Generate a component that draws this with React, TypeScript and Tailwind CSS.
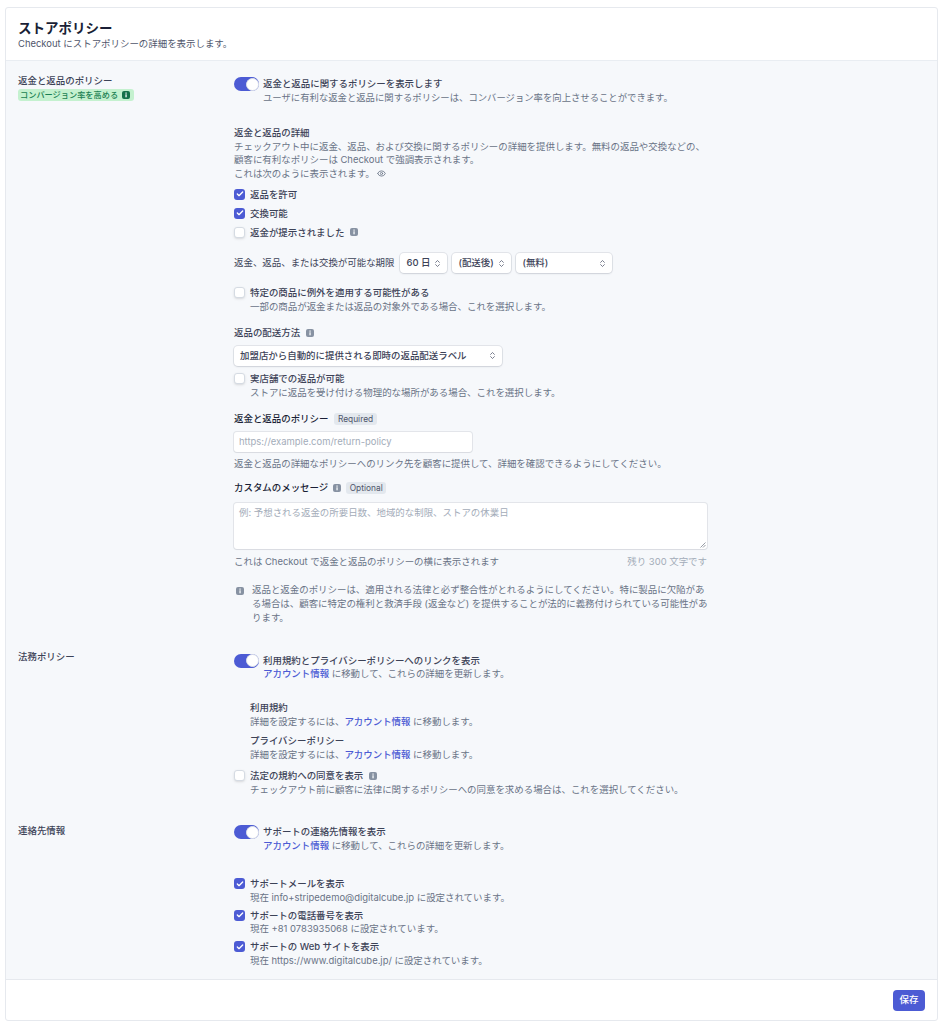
import { ChevronsUpDown, Check, Eye } from "lucide-react";
import type { ReactNode } from "react";

function Info({ color = "bg-[#8792a2]" }: { color?: string }) {
  return (
    <span className={`inline-flex h-[8px] w-[8px] flex-none items-center justify-center rounded-[2px] ${color}`}>
      <svg viewBox="0 0 8 8" className="h-[8px] w-[8px]" fill="#f6f8fb">
        <rect x="3.4" y="3.3" width="1.3" height="3" />
        <rect x="3.4" y="1.5" width="1.3" height="1.2" />
      </svg>
    </span>
  );
}

function Toggle() {
  return (
    <span className="flex h-[14px] w-[25px] flex-none items-center justify-end rounded-full bg-[#4c5bd4] pr-[0.5px]">
      <span className="h-[13px] w-[13px] rounded-full border border-[#dfe3ea] bg-white" />
    </span>
  );
}

function CheckBox({ on = false }: { on?: boolean }) {
  return on ? (
    <span className="mt-[1px] flex h-[11px] w-[11px] flex-none items-center justify-center rounded-[3px] bg-[#4c5bd4]">
      <Check size={8} strokeWidth={4} color="white" />
    </span>
  ) : (
    <span className="mt-[1px] h-[11px] w-[11px] flex-none rounded-[3px] border border-[#d5dbe3] bg-white shadow-sm" />
  );
}

function Title({ children }: { children: ReactNode }) {
  return <div className="font-medium text-[#3c4257]">{children}</div>;
}

function Muted({ children }: { children: ReactNode }) {
  return <div className="whitespace-nowrap text-[#697386]">{children}</div>;
}

function Link() {
  return <span className="font-medium text-[#4c5bd4]">アカウント情報</span>;
}

function CheckRow({ on, title, desc, className = "" }: { on?: boolean; title: ReactNode; desc?: ReactNode; className?: string }) {
  return (
    <div className={`flex gap-[5px] ${className}`}>
      <CheckBox on={on} />
      <div>
        <Title>{title}</Title>
        {desc && <Muted>{desc}</Muted>}
      </div>
    </div>
  );
}

function ToggleRow({ title, desc }: { title: string; desc: ReactNode }) {
  return (
    <div className="flex gap-[4px]">
      <Toggle />
      <div>
        <Title>{title}</Title>
        <Muted>{desc}</Muted>
      </div>
    </div>
  );
}

function Select({ label, width }: { label: string; width: string }) {
  return (
    <div className={`flex h-[20px] items-center justify-between rounded-[4px] bg-white pl-[6px] pr-[5px] font-medium text-[#3c4257] shadow-[0_0_0_1px_rgba(60,66,87,0.1),0_1px_2px_rgba(60,66,87,0.12)] ${width}`}>
      <span>{label}</span>
      <ChevronsUpDown size={9} strokeWidth={2} color="#4f566b" />
    </div>
  );
}

function Tag({ children }: { children: ReactNode }) {
  return <span className="rounded-[3px] bg-[#e3e8ee] px-[3.5px] text-[8.4px] font-normal leading-[12px] text-[#4f566b]">{children}</span>;
}

export default function App() {
  return (
    <div className="bg-white pb-[3px] pl-[5px] pr-[6px] pt-[7px] text-[9.45px] leading-[13.5px] [font-family:Inter,'Noto_Sans_CJK_JP',sans-serif]">
      <div className="rounded-[3px] border border-[#e6e9ee]">
        <div className="h-[53px] border-b border-[#e9edf2] px-[12px] pt-[11px]">
          <div className="text-[13.5px] font-bold leading-[18px] text-[#1a1f36]">ストアポリシー</div>
          <div className="leading-[13px] text-[#4f566b]">Checkout にストアポリシーの詳細を表示します。</div>
        </div>

        <div className="h-[918px] bg-[#f6f8fb] pl-[12px] pt-[13px]">
          {/* 返金と返品 */}
          <div className="flex">
            <div className="w-[216px] flex-none">
              <div className="font-medium text-[#3c4257]">返金と返品のポリシー</div>
              <div className="inline-flex h-[12px] items-center gap-[4px] rounded-[3px] bg-[#c4f1cf] pl-[2px] pr-[4px] text-[8.2px] font-medium text-[#1a7f52]">
                コンバージョン率を高める
                <Info color="bg-[#15714a]" />
              </div>
            </div>
            <div className="w-[474px] flex-none pt-[3px]">
              <ToggleRow title="返金と返品に関するポリシーを表示します" desc={<span className="text-[9.36px]">ユーザに有利な返金と返品に関するポリシーは、コンバージョン率を向上させることができます。</span>} />

              <div className="mt-[22px]">
                <Title>返金と返品の詳細</Title>
                <Muted>チェックアウト中に返金、返品、および交換に関するポリシーの詳細を提供します。無料の返品や交換などの、</Muted>
                <Muted>顧客に有利なポリシーは Checkout で強調表示されます。</Muted>
                <div className="flex items-center gap-[2px] text-[#697386]">
                  これは次のように表示されます。
                  <Eye size={9} strokeWidth={2.2} color="#697386" />
                </div>
              </div>

              <CheckRow on title="返品を許可" className="mt-[7.5px]" />
              <CheckRow on title="交換可能" className="mt-[5.5px]" />
              <CheckRow title={<span className="flex items-center gap-[6px]">返金が提示されました<Info /></span>} className="mt-[5.5px]" />

              <div className="mt-[14px] flex items-center">
                <span className="mr-[6px] text-[#3c4257]">返金、返品、または交換が可能な期限</span>
                <Select label="60 日" width="w-[47px]" />
                <Select label="(配送後)" width="ml-[5px] w-[59px]" />
                <Select label="(無料)" width="ml-[5px] w-[96px]" />
              </div>

              <CheckRow title="特定の商品に例外を適用する可能性がある" desc="一部の商品が返金または返品の対象外である場合、これを選択します。" className="mt-[13px]" />

              <div className="mt-[13px] flex items-center gap-[6px] font-medium text-[#3c4257]">
                返品の配送方法
                <Info />
              </div>
              <div className="mt-[6px]">
                <Select label="加盟店から自動的に提供される即時の返品配送ラベル" width="w-[268px]" />
              </div>
              <CheckRow title="実店舗での返品が可能" desc="ストアに返品を受け付ける物理的な場所がある場合、これを選択します。" className="mt-[6.5px]" />

              <div className="mt-[13px] flex items-center gap-[6px] font-medium text-[#1a1f36]">
                返金と返品のポリシー
                <Tag>Required</Tag>
              </div>
              <div className="mt-[6px] flex h-[20px] w-[238px] items-center rounded-[3px] bg-white pl-[5px] text-[#a3acb9] shadow-[0_0_0_1px_rgba(60,66,87,0.1),0_1px_1px_rgba(60,66,87,0.06)]">
                https://example.com/return-policy
              </div>
              <div className="mt-[5px] text-[#697386]">返金と返品の詳細なポリシーへのリンク先を顧客に提供して、詳細を確認できるようにしてください。</div>

              <div className="mt-[11px] flex items-center gap-[5px] font-medium text-[#1a1f36]">
                カスタムのメッセージ
                <Info />
                <Tag>Optional</Tag>
              </div>
              <div className="relative mt-[8px] h-[46px] w-[473px] rounded-[3px] bg-white pl-[5px] pt-[3px] text-[#a3acb9] shadow-[0_0_0_1px_rgba(60,66,87,0.1),0_1px_1px_rgba(60,66,87,0.06)]">
                例: 予想される返金の所要日数、地域的な制限、ストアの休業日
                <svg viewBox="0 0 6 6" className="absolute bottom-[1px] right-[1px] h-[6px] w-[6px]" stroke="#6b7280" strokeWidth="0.7">
                  <path d="M0.5 5.5 5.5 0.5M3 5.5 5.5 3" />
                </svg>
              </div>
              <div className="mt-[6px] flex w-[473px] justify-between text-[#697386]">
                <span>これは Checkout で返金と返品のポリシーの横に表示されます</span>
                <span className="text-[#a3acb9]">残り 300 文字です</span>
              </div>

              <div className="ml-[2px] mt-[15px] flex gap-[8px] whitespace-nowrap leading-[14px] text-[#697386]">
                <span className="mt-[2px]"><Info /></span>
                <div>
                  返品と返金のポリシーは、適用される法律と必ず整合性がとれるようにしてください。特に製品に欠陥があ
                  <br />
                  る場合は、顧客に特定の権利と救済手段 (返金など) を提供することが法的に義務付けられている可能性があ
                  <br />
                  ります。
                </div>
              </div>
            </div>
          </div>

          {/* 法務 */}
          <div className="mt-[24.5px] flex">
            <div className="w-[216px] flex-none font-medium text-[#3c4257]">法務ポリシー</div>
            <div className="w-[474px] flex-none pt-[4px]">
              <ToggleRow title="利用規約とプライバシーポリシーへのリンクを表示" desc={<><Link /> に移動して、これらの詳細を更新します。</>} />
              <div className="ml-[16px] mt-[20.5px] leading-[14px]">
                <Title>利用規約</Title>
                <Muted>詳細を設定するには、<Link /> に移動します。</Muted>
              </div>
              <div className="ml-[16px] mt-[5px] leading-[14px]">
                <Title>プライバシーポリシー</Title>
                <Muted>詳細を設定するには、<Link /> に移動します。</Muted>
              </div>
              <CheckRow
                title={<span className="flex items-center gap-[6px]">法定の規約への同意を表示<Info /></span>}
                desc="チェックアウト前に顧客に法律に関するポリシーへの同意を求める場合は、これを選択してください。"
                className="mt-[7px]"
              />
            </div>
          </div>

          {/* 連絡先 */}
          <div className="mt-[28px] flex">
            <div className="w-[216px] flex-none font-medium text-[#3c4257]">連絡先情報</div>
            <div className="w-[474px] flex-none pt-[1px]">
              <ToggleRow title="サポートの連絡先情報を表示" desc={<><Link /> に移動して、これらの詳細を更新します。</>} />
              <CheckRow on title="サポートメールを表示" desc="現在 info+stripedemo@digitalcube.jp に設定されています。" className="mt-[25px]" />
              <CheckRow on title="サポートの電話番号を表示" desc="現在 +81 0783935068 に設定されています。" className="mt-[4.5px]" />
              <CheckRow on title="サポートの Web サイトを表示" desc="現在 https://www.digitalcube.jp/ に設定されています。" className="mt-[4.5px]" />
            </div>
          </div>
        </div>

        <div className="flex h-[41px] items-center justify-end border-t border-[#e6e9ee] pr-[12px]">
          <button className="h-[21px] w-[32px] rounded-[4px] bg-[#4c5bd4] text-[9.5px] font-medium text-white">保存</button>
        </div>
      </div>
    </div>
  );
}
